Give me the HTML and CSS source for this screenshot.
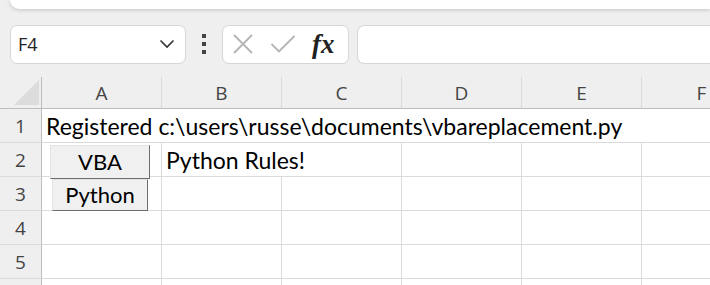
FILE: index.html
```html
<!DOCTYPE html>
<html lang="en">
<head>
  <meta charset="UTF-8" />
  <title>Sheet</title>
  <link rel="stylesheet" href="styles.css">
</head>
<body>
  <div class="ribbon"></div>

  <div class="formula-bar">
    <div class="name-box">
      <span>F4</span>
      <svg width="16" height="10" viewBox="0 0 16 10"><polyline points="1.5,1.5 8,8 14.5,1.5" fill="none" stroke="#333" stroke-width="1.6"/></svg>
    </div>
    <div class="dots"><i></i><i></i><i></i></div>
    <div class="fx-box">
      <svg width="22" height="22" viewBox="0 0 22 22"><path d="M2 2 L20 20 M20 2 L2 20" stroke="#b4b4b4" stroke-width="1.8" fill="none"/></svg>
      <svg width="26" height="22" viewBox="0 0 26 22"><polyline points="1.5,11 9,18.5 24.5,3" stroke="#b4b4b4" stroke-width="1.8" fill="none"/></svg>
      <span class="fx">fx</span>
    </div>
    <div class="formula-input"></div>
  </div>

  <div class="sheet">
    <div class="corner"><div class="tri"></div></div>
    <div class="col-head">A</div>
    <div class="col-head">B</div>
    <div class="col-head">C</div>
    <div class="col-head">D</div>
    <div class="col-head">E</div>
    <div class="col-head">F</div>

    <div class="row-head">1</div>
    <div class="cell span6">Registered c:\users\russe\documents\vbareplacement.py</div>

    <div class="row-head">2</div>
    <div class="cell"></div>
    <div class="cell span2">Python Rules!</div>
    <div class="cell"></div><div class="cell"></div><div class="cell"></div>

    <div class="row-head">3</div>
    <div class="cell"></div><div class="cell"></div><div class="cell"></div><div class="cell"></div><div class="cell"></div><div class="cell"></div>

    <div class="row-head">4</div>
    <div class="cell"></div><div class="cell"></div><div class="cell"></div><div class="cell"></div><div class="cell"></div><div class="cell"></div>

    <div class="row-head">5</div>
    <div class="cell"></div><div class="cell"></div><div class="cell"></div><div class="cell"></div><div class="cell"></div><div class="cell"></div>

    <div class="row-head"></div>
    <div class="cell"></div><div class="cell"></div><div class="cell"></div><div class="cell"></div><div class="cell"></div><div class="cell"></div>

    <button class="form-btn btn-vba">VBA</button>
    <button class="form-btn btn-py">Python</button>
  </div>
</body>
</html>
```

FILE: styles.css
```css
body {
  margin: 0;
  width: 710px;
  height: 285px;
  overflow: hidden;
  background: #efefef;
  font-family: "Open Sans", "Noto Sans", sans-serif;
}
.ribbon {
  height: 9px;
  margin-left: 10px;
  background: #fff;
  border-bottom-left-radius: 9px;
  box-shadow: 0 1px 4px rgba(0, 0, 0, 0.18);
}
.formula-bar {
  display: flex;
  align-items: center;
  height: 40px;
  margin-top: 15px;
  padding-left: 10px;
}
.name-box {
  box-sizing: border-box;
  width: 176px;
  height: 39px;
  background: #fff;
  border: 1px solid #d6d6d6;
  border-radius: 7px;
  display: flex;
  align-items: center;
  justify-content: space-between;
  padding: 0 10px 0 7px;
  font-size: 18px;
  color: #222;
}
.dots {
  width: 36px;
  display: flex;
  flex-direction: column;
  align-items: center;
  gap: 4px;
}
.dots i {
  width: 4px;
  height: 4px;
  background: #444;
}
.fx-box {
  box-sizing: border-box;
  width: 127px;
  height: 39px;
  background: #fff;
  border: 1px solid #d6d6d6;
  border-radius: 7px;
  display: flex;
  align-items: center;
  padding-left: 9px;
  gap: 16px;
}
.fx {
  font-family: "Liberation Serif", "DejaVu Serif", serif;
  font-style: italic;
  font-weight: bold;
  font-size: 27px;
  color: #222;
  margin-left: 0;
  line-height: 1;
}
.formula-input {
  box-sizing: border-box;
  flex: 1;
  height: 39px;
  margin-left: 8px;
  background: #fff;
  border: 1px solid #d6d6d6;
  border-right: none;
  border-radius: 7px 0 0 7px;
}
.sheet {
  position: relative;
  margin-top: 13px;
  display: grid;
  grid-template-columns: 42px repeat(6, 120px);
  grid-template-rows: 32px repeat(6, 34px);
  font-family: "Lato", "Open Sans", sans-serif;
}
.corner {
  border-bottom: 1px solid #bdbdbd;
  border-right: 1px solid #bdbdbd;
  position: relative;
}
.tri {
  position: absolute;
  left: 14px;
  top: 3px;
  width: 0;
  height: 0;
  border-left: 25px solid transparent;
  border-bottom: 25px solid #dcdcdc;
}
.col-head {
  border-bottom: 1px solid #bdbdbd;
  border-right: 1px solid #dadada;
  display: flex;
  align-items: center;
  justify-content: center;
  font-family: "Open Sans", sans-serif;
  font-size: 19px;
  color: #444;
}
.row-head {
  border-right: 1px solid #bdbdbd;
  border-bottom: 1px solid #dadada;
  display: flex;
  align-items: center;
  justify-content: center;
  font-family: "Open Sans", sans-serif;
  font-size: 19px;
  color: #444;
}
.cell {
  background: #fff;
  border-right: 1px solid #dadada;
  border-bottom: 1px solid #dadada;
  display: flex;
  align-items: center;
  padding-left: 4px;
  white-space: nowrap;
  font-size: 23px;
  color: #000;
}
.span6 { grid-column: span 6; }
.span2 { grid-column: span 2; }
.form-btn {
  position: absolute;
  box-sizing: border-box;
  background: #f0f0f0;
  border: 1px solid;
  border-color: #e4e4e4 #6e6e6e #6e6e6e #e4e4e4;
  font-family: "Lato", "Open Sans", sans-serif;
  font-size: 22px;
  color: #000;
  padding: 0;
  line-height: 1;
}
.btn-vba {
  left: 50px;
  top: 68px;
  width: 100px;
  height: 34px;
}
.btn-py {
  left: 52px;
  top: 102px;
  width: 96px;
  height: 32px;
}
```
